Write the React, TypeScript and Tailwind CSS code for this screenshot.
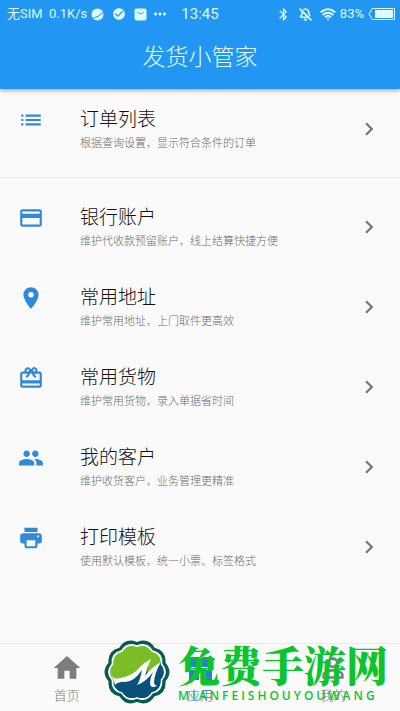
import type { ReactNode } from 'react'
import {
  MdBluetooth,
  MdCardGiftcard,
  MdCheckCircle,
  MdChevronRight,
  MdCreditCard,
  MdHome,
  MdList,
  MdMoreHoriz,
  MdPeople,
  MdPersonOutline,
  MdPlace,
} from 'react-icons/md'
import { BellOff, Wifi } from 'lucide-react'

interface Entry {
  title: string
  desc: string
  icon: ReactNode
}

const orderEntry: Entry = {
  title: '订单列表',
  desc: '根据查询设置，显示符合条件的订单',
  icon: <MdList size={26} />,
}

const entries: Entry[] = [
  { title: '银行账户', desc: '维护代收款预留账户，线上结算快捷方便', icon: <MdCreditCard size={26} /> },
  { title: '常用地址', desc: '维护常用地址，上门取件更高效', icon: <MdPlace size={26} /> },
  { title: '常用货物', desc: '维护常用货物，录入单据省时间', icon: <MdCardGiftcard size={26} /> },
  { title: '我的客户', desc: '维护收货客户，业务管理更精准', icon: <MdPeople size={26} /> },
  { title: '打印模板', desc: '使用默认模板，统一小票、标签格式', icon: <PrinterIcon /> },
]

const tabs: { label: string; icon: ReactNode; active?: boolean }[] = [
  { label: '首页', icon: <MdHome size={32} /> },
  { label: '应用', icon: <AppsIcon />, active: true },
  { label: '我的', icon: <MdPersonOutline size={32} /> },
]

function PrinterIcon() {
  return (
    <svg width="26" height="26" viewBox="0 0 24 24" fill="currentColor">
      <rect x="6" y="2.5" width="12" height="4" rx="0.6" />
      <path
        fillRule="evenodd"
        d="M5 7.5h14a3 3 0 0 1 3 3V15a2 2 0 0 1-2 2h-2v2.500a2 2 0 0 1-2 2H8a2 2 0 0 1-2-2V17H4a2 2 0 0 1-2-2v-4.500a3 3 0 0 1 3-3zM8 14v5.500h8V14zM18.500 9.500a1 1 0 1 0 0 2 1 1 0 0 0 0-2z"
      />
    </svg>
  )
}

function AppsIcon() {
  return (
    <svg width="32" height="32" viewBox="0 0 32 32" fill="currentColor">
      <rect x="5" y="5" width="10" height="10" />
      <rect x="18" y="5" width="10" height="10" />
      <rect x="5" y="18" width="10" height="10" />
      <rect x="18" y="18" width="10" height="10" />
    </svg>
  )
}

function StatusBar() {
  return (
    <div className="relative flex h-7 items-center justify-between pl-[7px] pr-1 text-[13px] font-normal text-[#dcfaff]">
      <div className="flex items-center gap-1">
        <span className="whitespace-nowrap">无SIM&nbsp; 0.1K/s</span>
        <svg width="13" height="13" viewBox="0 0 13 13">
          <circle cx="6.500" cy="6.500" r="6" fill="currentColor" />
          <path d="M1 10.500Q8 9 12.500 4" stroke="#2196f3" fill="none" />
        </svg>
        <MdCheckCircle size={14} className="ml-1" />
        <svg width="13" height="13" viewBox="0 0 13 13" className="ml-1">
          <rect x="0.500" y="0.500" width="12" height="12" rx="2" fill="currentColor" />
          <path d="M3.500 4q3 4 6 0" stroke="#2196f3" fill="none" />
        </svg>
        <MdMoreHoriz size={18} />
      </div>
      <span className="absolute left-1/2 -translate-x-1/2 text-[15px]">13:45</span>
      <div className="flex items-center">
        <MdBluetooth size={15} />
        <BellOff size={13} strokeWidth={3} className="mx-2" />
        <Wifi size={16} strokeWidth={3} className="mr-1" />
        <span className="mr-1">83%</span>
        <svg width="28" height="12" viewBox="0 0 28 12">
          <path d="M5 0.500h21.500v11H5q-2 0-2-2v-1.500Q1 8 1 6t2-2V2.500q0-2 2-2z" fill="none" stroke="currentColor" />
          <rect x="7" y="2" width="18" height="8" fill="currentColor" />
        </svg>
      </div>
    </div>
  )
}

function EntryRow({ entry }: { entry: Entry }) {
  return (
    <button type="button" className="flex h-20 w-full items-center text-left">
      <span className="flex w-20 shrink-0 self-start pl-[18px] pt-[18px] text-[#2e8bd9]">{entry.icon}</span>
      <span className="flex min-w-0 flex-1 flex-col pt-[2px]">
        <span className="text-[19px] leading-7 text-[#111]">{entry.title}</span>
        <span className="text-[11px] leading-5 text-[#6c6c6c]">{entry.desc}</span>
      </span>
      <MdChevronRight size={26} className="mr-[18px] shrink-0 text-[#757575]" />
    </button>
  )
}

// scalloped ten-sided badge outline
const badge =
  'M33 3Q44.300 -1.700 50.600 8.700Q62.500 11.500 61.500 23.700Q69.500 33 61.500 42.300Q62.500 54.500 50.600 57.300Q44.300 67.700 33 63Q21.700 67.700 15.400 57.300Q3.500 54.500 4.500 42.300Q-3.500 33 4.500 23.700Q3.500 11.500 15.400 8.700Q21.700 -1.700 33 3Z'

function SiteLogo() {
  return (
    <svg width="66" height="66" viewBox="0 0 66 66" className="shrink-0">
      <defs>
        <clipPath id="badge-inner">
          <path d={badge} transform="translate(5.600 5.600) scale(0.830)" />
        </clipPath>
      </defs>
      <path d={badge} fill="#065c50" />
      <path d={badge} fill="#fff" transform="translate(3.600 3.600) scale(0.890)" />
      <g clipPath="url(#badge-inner)">
        <rect width="66" height="66" fill="#7bbd27" />
        <path d="M4 45Q26 44 36 31L44 24L43 35L59 21L62 62H4Z" fill="#07517b" />
      </g>
      <path
        d="M8 37Q11 41 16 39Q29 37 36 28Q41 23 47 20Q43 28 41 37Q48 28 57 23Q50 35 50 44Q51 47 53 47Q46 50 46 44Q46 39 49 33Q42 43 33 46Q36 42 38 31Q30 43 21 43Q15 42 11 46Q11 42 8 37Z"
        fill="#fff"
      />
    </svg>
  )
}

function SiteBanner() {
  return (
    <div className="pointer-events-none absolute bottom-[6px] left-1/2 flex w-[296px] -translate-x-[96px] items-center gap-2">
      <SiteLogo />
      <div className="flex flex-col whitespace-nowrap text-[#0bc52f]">
        <span className="font-['Noto_Serif_CJK_SC','Noto_Sans_CJK_SC',serif] text-[42px] font-black leading-[48px]">免费手游网</span>
        <span className="font-['Open_Sans',sans-serif] text-[12px] font-semibold leading-4 tracking-[3px]">MIANFEISHOUYOUWANG</span>
      </div>
    </div>
  )
}

export default function App() {
  return (
    <div className="flex min-h-screen flex-col bg-[#fafafa] font-['Roboto','Noto_Sans_CJK_SC',sans-serif] font-light">
      <header className="relative bg-[#2196f3] shadow-[0_2px_4px_rgba(0,0,0,0.3)]">
        <StatusBar />
        <h1 className="flex h-[61px] items-center justify-center text-[23px] text-[#e4fcff]">发货小管家</h1>
      </header>

      <main className="flex-1">
        <section className="border-b border-[#e9e9e9] pb-2">
          <EntryRow entry={orderEntry} />
        </section>
        <section className="pt-[9px]">
          {entries.map((entry) => (
            <EntryRow key={entry.title} entry={entry} />
          ))}
        </section>
      </main>

      <footer className="relative">
        <nav className="flex h-[68px] border-t border-[#e9e9e9]">
          {tabs.map(({ label, icon, active }) => (
            <a
              key={label}
              href="#"
              className={`flex flex-1 flex-col items-center pt-2 text-[13px] leading-6 ${active ? 'text-[#2c7fc9]' : 'text-[#7d7d7d]'}`}
            >
              {icon}
              {label}
            </a>
          ))}
        </nav>
        <SiteBanner />
      </footer>
    </div>
  )
}
